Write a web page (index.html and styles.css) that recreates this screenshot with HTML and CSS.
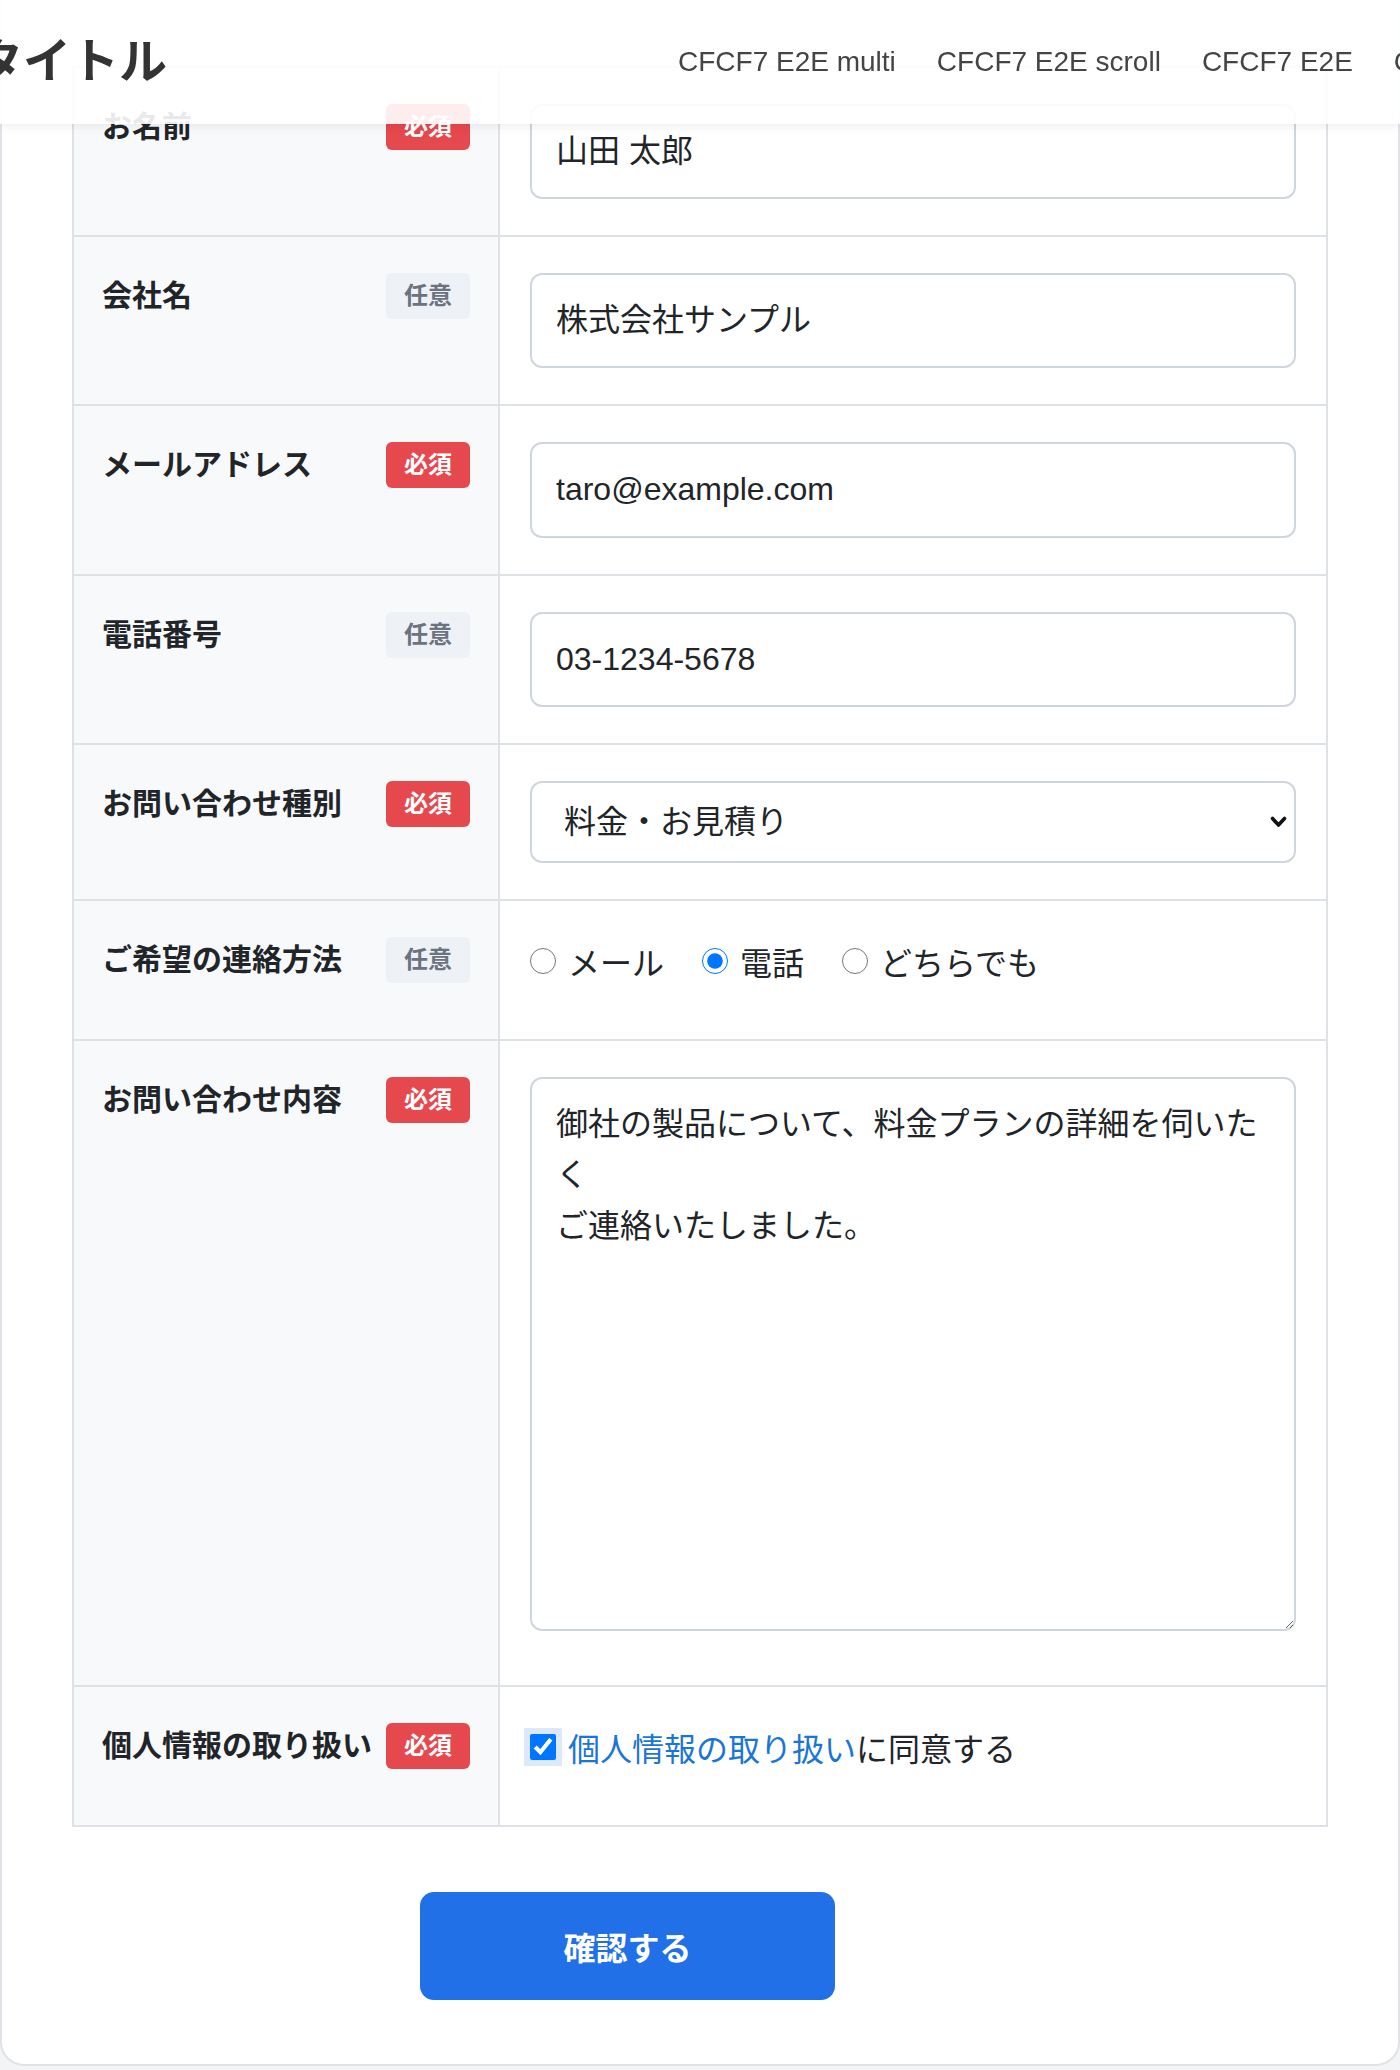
FILE: index.html
```html
<!DOCTYPE html>
<html lang="ja">
<head>
<meta charset="utf-8">
<title>お問い合わせ</title>
<link rel="stylesheet" href="styles.css">
</head>
<body>
<header class="site-header">
  <div class="header-inner">
    <div class="site-title">サイトタイトル</div>
    <nav class="site-nav">
      <a href="#">CFCF7 E2E multi</a>
      <a href="#">CFCF7 E2E scroll</a>
      <a href="#">CFCF7 E2E</a>
      <a href="#">CFCF7 E2E confirm</a>
    </nav>
  </div>
</header>

<main class="card">
  <form class="contact-form">
    <div class="form-table">
      <div class="form-row">
        <div class="form-head"><span class="form-label">お名前</span><span class="badge badge-required">必須</span></div>
        <div class="form-body"><input class="form-control" type="text" value="山田 太郎"></div>
      </div>
      <div class="form-row">
        <div class="form-head"><span class="form-label">会社名</span><span class="badge badge-optional">任意</span></div>
        <div class="form-body"><input class="form-control" type="text" value="株式会社サンプル"></div>
      </div>
      <div class="form-row">
        <div class="form-head"><span class="form-label">メールアドレス</span><span class="badge badge-required">必須</span></div>
        <div class="form-body"><input class="form-control" type="email" value="taro@example.com"></div>
      </div>
      <div class="form-row">
        <div class="form-head"><span class="form-label">電話番号</span><span class="badge badge-optional">任意</span></div>
        <div class="form-body"><input class="form-control" type="tel" value="03-1234-5678"></div>
      </div>
      <div class="form-row">
        <div class="form-head"><span class="form-label">お問い合わせ種別</span><span class="badge badge-required">必須</span></div>
        <div class="form-body">
          <div class="select-wrap">
            <select class="form-control form-select">
              <option>料金・お見積り</option>
              <option>製品について</option>
              <option>その他</option>
            </select>
            <svg class="select-arrow" width="17" height="12" viewBox="0 0 17 12" aria-hidden="true"><polyline points="2.5,2.5 8.5,9 14.5,2.5" fill="none" stroke="#111" stroke-width="3.6" stroke-linecap="round" stroke-linejoin="round"/></svg>
          </div>
        </div>
      </div>
      <div class="form-row">
        <div class="form-head"><span class="form-label">ご希望の連絡方法</span><span class="badge badge-optional">任意</span></div>
        <div class="form-body">
          <div class="choices">
            <label class="choice"><input type="radio" name="contact-method">メール</label>
            <label class="choice"><input type="radio" name="contact-method" checked>電話</label>
            <label class="choice"><input type="radio" name="contact-method">どちらでも</label>
          </div>
        </div>
      </div>
      <div class="form-row">
        <div class="form-head"><span class="form-label">お問い合わせ内容</span><span class="badge badge-required">必須</span></div>
        <div class="form-body"><textarea class="form-control form-textarea">御社の製品について、料金プランの詳細を伺いたく
ご連絡いたしました。</textarea></div>
      </div>
      <div class="form-row">
        <div class="form-head"><span class="form-label">個人情報の取り扱い</span><span class="badge badge-required">必須</span></div>
        <div class="form-body">
          <label class="consent"><span class="check-box"><input type="checkbox" checked></span><span><a class="consent-link" href="#">個人情報の取り扱い</a>に同意する</span></label>
        </div>
      </div>
    </div>
    <div class="form-actions">
      <button class="btn-submit" type="submit">確認する</button>
    </div>
  </form>
</main>
</body>
</html>
```

FILE: styles.css
```css
* {
  box-sizing: border-box;
}

html, body {
  margin: 0;
  padding: 0;
}

body {
  background: #f3f4f6;
  font-family: "Liberation Sans", "Noto Sans CJK JP", sans-serif;
  color: #212529;
}

/* Fixed top bar */
.site-header {
  position: fixed;
  top: 0;
  left: 0;
  width: 100%;
  height: 124px;
  background: rgba(255, 255, 255, 0.9);
  box-shadow: 0 2px 10px rgba(0, 0, 0, 0.08);
  overflow: hidden;
  z-index: 10;
}

.header-inner {
  display: flex;
  align-items: center;
  height: 100%;
  margin-left: -169px;
  white-space: nowrap;
}

.site-title {
  font-size: 48px;
  font-weight: 700;
  color: #333;
  line-height: 1;
}

.site-nav {
  display: flex;
  gap: 41px;
  margin-left: 511px;
  font-size: 28px;
}

.site-nav a {
  color: #444;
  text-decoration: none;
}

/* Form card */
.card {
  background: #fff;
  border: 2px solid #dfe3e8;
  border-top: 0;
  border-radius: 0 0 24px 24px;
  padding: 66px 70px 0;
}

.form-table {
  border: 2px solid #dee2e6;
}

.form-row {
  display: grid;
  grid-template-columns: 426px 1fr;
}

.form-row + .form-row {
  border-top: 2px solid #dee2e6;
}

.form-head {
  background: #f8f9fb;
  border-right: 2px solid #dee2e6;
  padding: 36px 28px;
  display: flex;
  justify-content: space-between;
  align-items: flex-start;
  gap: 12px;
}

.form-label {
  font-size: 30px;
  font-weight: 700;
  line-height: 45px;
  color: #212529;
  white-space: nowrap;
}

.badge {
  flex: none;
  font-size: 24px;
  font-weight: 700;
  line-height: 30px;
  padding: 8px 18px;
  border-radius: 6px;
}

.badge-required {
  background: #e5484d;
  color: #fff;
}

.badge-optional {
  background: #eef1f5;
  color: #6b7280;
}

.form-body {
  padding: 36px 30px;
}

.form-control {
  display: block;
  width: 100%;
  margin: 0;
  font-family: inherit;
  font-size: 32px;
  line-height: 1.6;
  padding: 20px 24px;
  border: 2px solid #cfd6de;
  border-radius: 12px;
  color: #212529;
  background: #fff;
  outline: none;
}

.select-wrap {
  position: relative;
}

.form-select {
  appearance: none;
  -webkit-appearance: none;
  height: 82px;
  padding: 0 60px 0 32px;
  line-height: normal;
}

.select-arrow {
  position: absolute;
  right: 9px;
  top: 50%;
  transform: translateY(-50%);
  pointer-events: none;
}

.form-textarea {
  height: 554px;
  margin-bottom: 18px;
}

.choices {
  display: flex;
  align-items: center;
  gap: 38px;
  height: 48px;
  margin-bottom: 18px;
  font-size: 32px;
}

.choice {
  display: flex;
  align-items: center;
  gap: 12px;
}

.choice input {
  width: 26px;
  height: 26px;
  margin: 0;
}

.consent {
  display: flex;
  align-items: center;
  gap: 6px;
  height: 48px;
  margin-bottom: 18px;
  font-size: 32px;
}

.check-box {
  display: inline-flex;
  padding: 6px;
  margin-left: -6px;
  background: #dde8fb;
}

.check-box input {
  width: 26px;
  height: 26px;
  margin: 0;
}

.consent-link {
  color: #1a76d6;
  text-decoration: none;
}

.form-actions {
  padding: 65px 0 64px 348px;
}

.btn-submit {
  display: block;
  width: 415px;
  height: 108px;
  font-family: inherit;
  font-size: 32px;
  font-weight: 700;
  color: #fff;
  background: #2170e8;
  border: 0;
  border-radius: 14px;
}
```
